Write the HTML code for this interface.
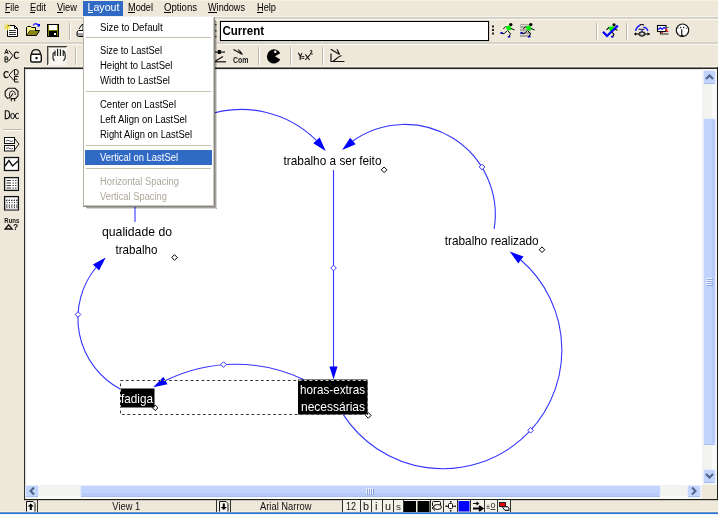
<!DOCTYPE html>
<html><head><meta charset="utf-8">
<style>
html,body{margin:0;padding:0;width:719px;height:515px;overflow:hidden;background:#EDE8D9;}
svg{display:block;will-change:transform;}
text{font-family:"Liberation Sans",sans-serif;}
</style></head><body>
<svg width="719" height="515" viewBox="0 0 719 515">
<rect x="0" y="0" width="719" height="515" fill="#EDE8D9"/>
<!-- menu bar -->
<rect x="83" y="0" width="40" height="17" fill="#316AC5"/>
<g font-size="10.5" fill="#000">
<text x="5" y="11" textLength="14" lengthAdjust="spacingAndGlyphs">File</text>
<text x="30" y="11" textLength="16" lengthAdjust="spacingAndGlyphs">Edit</text>
<text x="57" y="11" textLength="20" lengthAdjust="spacingAndGlyphs">View</text>
<text x="87.5" y="11" textLength="32" lengthAdjust="spacingAndGlyphs" fill="#fff">Layout</text>
<text x="128" y="11" textLength="25" lengthAdjust="spacingAndGlyphs">Model</text>
<text x="164" y="11" textLength="33" lengthAdjust="spacingAndGlyphs">Options</text>
<text x="208" y="11" textLength="37" lengthAdjust="spacingAndGlyphs">Windows</text>
<text x="257" y="11" textLength="19" lengthAdjust="spacingAndGlyphs">Help</text>
</g>
<g fill="#000">
<rect x="5" y="12" width="5" height="1"/>
<rect x="30" y="12" width="5" height="1"/>
<rect x="57" y="12" width="6" height="1"/>
<rect x="88" y="12" width="5" height="1" fill="#fff"/>
<rect x="128" y="12" width="7" height="1"/>
<rect x="164" y="12" width="7" height="1"/>
<rect x="208" y="12" width="9" height="1"/>
<rect x="257" y="12" width="6" height="1"/>
</g>
<!-- rebar lines -->
<rect x="0" y="0" width="719" height="1" fill="#F6F1DC"/>
<rect x="0" y="16" width="719" height="1" fill="#F4F2E8"/>
<rect x="0" y="17" width="719" height="2" fill="#D6D4CA"/>
<rect x="0" y="19" width="719" height="1" fill="#F8F7F0"/>
<rect x="0" y="42" width="719" height="2" fill="#D6D4CA"/>
<rect x="0" y="44" width="719" height="1" fill="#F8F7F0"/>
<!-- canvas -->
<rect x="24" y="66" width="694" height="1" fill="#F5F3EA"/>
<rect x="24" y="67" width="694" height="433" fill="#fff"/>
<rect x="24" y="67" width="694" height="1" fill="#807E78"/>
<rect x="24" y="68" width="694" height="1" fill="#262626"/>
<rect x="24" y="67" width="1" height="433" fill="#2E2E2E"/>
<rect x="25" y="69" width="1" height="430" fill="#DDDDDD"/>
<rect x="25" y="69" width="692" height="1" fill="#E4E4E4"/>
<rect x="717" y="67" width="1" height="433" fill="#1E1E1E"/>
<rect x="24" y="499" width="694" height="1" fill="#1E1E1E"/>
<rect x="24" y="500" width="694" height="1" fill="#C9C5B5"/>
<rect x="718" y="0" width="1" height="515" fill="#FFFFFF"/>
<!-- vertical scrollbar -->
<rect x="702" y="69" width="15" height="416" fill="#F3F3EF"/>
<rect x="712" y="84" width="4" height="400" fill="#FAFAF8"/>
<rect x="703.5" y="118.5" width="12" height="326" rx="2" fill="#C3D4FC" stroke="#E4ECFE"/>
<rect x="704" y="444" width="11" height="1" fill="#A6BEF0"/>
<rect x="712" y="120" width="3" height="323" fill="#B6CBF8"/>
<rect x="703.5" y="70.5" width="12" height="13" rx="2" fill="#C3D4FC" stroke="#E4ECFE"/>
<rect x="704" y="83" width="11" height="1" fill="#A6BEF0"/>
<rect x="703.5" y="469.5" width="12" height="13" rx="2" fill="#C3D4FC" stroke="#E4ECFE"/>
<rect x="704" y="482" width="11" height="1" fill="#A6BEF0"/>
<path d="M706 79 L709.5 75.5 L713 79" fill="none" stroke="#4D6185" stroke-width="2"/>
<path d="M706 474 L709.5 477.5 L713 474" fill="none" stroke="#4D6185" stroke-width="2"/>
<!-- horizontal scrollbar -->
<rect x="26" y="485" width="677" height="14" fill="#F3F3EF"/>
<rect x="38" y="496" width="650" height="3" fill="#FAFAF8"/>
<rect x="80.5" y="485.5" width="580" height="11" rx="2" fill="#C3D4FC" stroke="#E4ECFE"/>
<rect x="81" y="496" width="579" height="1" fill="#A6BEF0"/>
<rect x="82" y="493" width="577" height="3" fill="#B6CBF8"/>
<rect x="25.5" y="485.5" width="13" height="11" rx="2" fill="#C3D4FC" stroke="#E4ECFE"/>
<rect x="26" y="496" width="12" height="1" fill="#A6BEF0"/>
<rect x="687.5" y="485.5" width="13" height="11" rx="2" fill="#C3D4FC" stroke="#E4ECFE"/>
<rect x="688" y="496" width="12" height="1" fill="#A6BEF0"/>
<path d="M34 487.5 L30.5 491 L34 494.5" fill="none" stroke="#4D6185" stroke-width="2"/>
<path d="M692 487.5 L695.5 491 L692 494.5" fill="none" stroke="#4D6185" stroke-width="2"/>
<rect x="702" y="485" width="15" height="14" fill="#EDE8D9"/>
<g fill="#EEF3FF"><rect x="706" y="278" width="6" height="1"/><rect x="706" y="280" width="6" height="1"/><rect x="706" y="282" width="6" height="1"/><rect x="706" y="284" width="6" height="1"/></g>
<g fill="#8EA6DC"><rect x="707" y="279" width="6" height="1"/><rect x="707" y="281" width="6" height="1"/><rect x="707" y="283" width="6" height="1"/><rect x="707" y="285" width="6" height="1"/></g>
<g fill="#EEF3FF"><rect x="366" y="488" width="1" height="6"/><rect x="368" y="488" width="1" height="6"/><rect x="370" y="488" width="1" height="6"/><rect x="372" y="488" width="1" height="6"/></g>
<g fill="#8EA6DC"><rect x="367" y="489" width="1" height="6"/><rect x="369" y="489" width="1" height="6"/><rect x="371" y="489" width="1" height="6"/><rect x="373" y="489" width="1" height="6"/></g>
<!-- bottom blue line -->
<rect x="0" y="511" width="718" height="1" fill="#F7F1DA"/>
<rect x="0" y="512" width="718" height="1" fill="#6E93C8"/>
<rect x="0" y="513" width="718" height="1" fill="#2175DB"/>
<rect x="0" y="514" width="719" height="1" fill="#F4F8FF"/>

<g id="diagram">
<path d="M135 206 V222" stroke="#3535FF" stroke-width="1.1"/>
<path d="M135.26 206.02 A106.50 106.50 0 0 1 316.46 140.45" fill="none" stroke="#3535FF" stroke-width="1.1"/>
<path d="M325.70 150.95 L313.23 143.29 L319.69 137.61Z" fill="#0000FF"/>
<path d="M494.16 229.03 A90.30 90.30 0 0 0 352.88 140.96" fill="none" stroke="#3535FF" stroke-width="1.1"/>
<path d="M342.12 149.89 L350.13 137.65 L355.63 144.27Z" fill="#0000FF"/>
<path d="M343.44 414.91 A118.90 118.90 0 1 0 520.84 260.02" fill="none" stroke="#3535FF" stroke-width="1.1"/>
<path d="M509.74 251.50 L523.45 256.61 L518.22 263.43Z" fill="#0000FF"/>
<path d="M120.00 388.99 A80.40 80.40 0 0 1 95.98 267.50" fill="none" stroke="#3535FF" stroke-width="1.1"/>
<path d="M105.73 257.47 L99.07 270.50 L92.90 264.50Z" fill="#0000FF"/>
<path d="M303.70 379.61 A158.20 158.20 0 0 0 165.47 380.60" fill="none" stroke="#3535FF" stroke-width="1.1"/>
<path d="M153.21 387.35 L163.39 376.83 L167.54 384.36Z" fill="#0000FF"/>
<path d="M333.5 170 L333.5 367" stroke="#3535FF" stroke-width="1.1"/>
<path d="M333.5 379.5 L329.5 366.5 L337.5 366.5Z" fill="#0000FF"/>
<path d="M482.0 164.2 L484.8 167.0 L482.0 169.8 L479.2 167.0Z" fill="#fff" stroke="#3535FF" stroke-width="1"/>
<path d="M333.5 265.2 L336.3 268.0 L333.5 270.8 L330.7 268.0Z" fill="#fff" stroke="#3535FF" stroke-width="1"/>
<path d="M530.6 427.5 L533.4 430.3 L530.6 433.1 L527.8 430.3Z" fill="#fff" stroke="#3535FF" stroke-width="1"/>
<path d="M78.0 311.7 L80.8 314.5 L78.0 317.3 L75.2 314.5Z" fill="#fff" stroke="#3535FF" stroke-width="1"/>
<path d="M223.5 361.7 L226.3 364.5 L223.5 367.3 L220.7 364.5Z" fill="#fff" stroke="#3535FF" stroke-width="1"/>
<path d="M384.1 167.0 L386.9 169.8 L384.1 172.6 L381.3 169.8Z" fill="#fff" stroke="#000" stroke-width="1"/>
<path d="M542.0 246.9 L544.8 249.7 L542.0 252.5 L539.2 249.7Z" fill="#fff" stroke="#000" stroke-width="1"/>
<path d="M174.5 254.7 L177.3 257.5 L174.5 260.3 L171.7 257.5Z" fill="#fff" stroke="#000" stroke-width="1"/>
<path d="M155.2 405.0 L158.0 407.8 L155.2 410.6 L152.4 407.8Z" fill="#fff" stroke="#000" stroke-width="1"/>
<path d="M368.3 412.6 L371.1 415.4 L368.3 418.2 L365.5 415.4Z" fill="#fff" stroke="#000" stroke-width="1"/>
<g font-size="13.5" fill="#000">
<text x="283.5" y="165" textLength="98" lengthAdjust="spacingAndGlyphs">trabalho a ser feito</text>
<text x="444.7" y="245" textLength="94" lengthAdjust="spacingAndGlyphs">trabalho realizado</text>
<text x="102" y="236" textLength="70" lengthAdjust="spacingAndGlyphs">qualidade do</text>
<text x="115.5" y="254" textLength="42" lengthAdjust="spacingAndGlyphs">trabalho</text>
</g>
<!-- selection dashed rect -->

<rect x="120" y="388.5" width="34.5" height="19" fill="#000"/>
<rect x="298" y="379.5" width="69.5" height="35" fill="#000"/>
<g font-size="13.5" fill="#fff">
<text x="121" y="403" textLength="32" lengthAdjust="spacingAndGlyphs">fadiga</text>
<text x="300" y="393.5" textLength="65" lengthAdjust="spacingAndGlyphs">horas-extras</text>
<text x="301" y="411" textLength="64" lengthAdjust="spacingAndGlyphs">necessárias</text>
</g>

<rect x="120.5" y="380.5" width="247" height="34" fill="none" stroke="#C8C8C8" stroke-dasharray="2.8,2.6" style="mix-blend-mode:difference"/>

</g>
<g id="icons">
<!-- ROW 1 -->
<!-- new doc -->
<g>
<path d="M7.5 25.5 H14.5 L17.5 28.5 V36.5 H7.5 Z" fill="#fff" stroke="#000"/>
<path d="M14.5 25.5 V28.5 H17.5" fill="none" stroke="#000"/>
<rect x="9" y="30" width="7" height="1" fill="#333"/>
<rect x="9" y="32" width="7" height="1" fill="#333"/>
<rect x="9" y="34" width="7" height="1" fill="#333"/>
<path d="M4.5 24.5 L10.5 29.5 M10.5 24.5 L4.5 29.5 M7.5 23.5 V30.5 M4 27 H11" stroke="#E6D820" stroke-width="0.9"/>
</g>
<!-- open folder -->
<g>
<path d="M26.5 27.5 L27.5 26.5 H30.5 L31.5 27.5 H35.5 V30.5" fill="#FFFF88" stroke="#000"/>
<path d="M26.5 27.5 V35.5" stroke="#000"/>
<path d="M26.5 35.5 L29.5 30.5 H39.5 L36.5 35.5 Z" fill="#8A8A10" stroke="#000"/>
<path d="M27 29 H35 V30.5 H29.3 L27 34.5Z" fill="#FFFF88"/>
<path d="M33 25.5 Q35 22.5 38 24.5" fill="none" stroke="#3030FF" stroke-width="1.3"/>
<rect x="37.5" y="24" width="2.5" height="2.5" fill="#0000FF"/>
</g>
<!-- save -->
<g>
<rect x="47" y="24" width="12" height="13" fill="#000"/>
<rect x="48" y="25" width="10" height="6" fill="#808000"/>
<rect x="49" y="25" width="8" height="5" fill="#fff"/>
<rect x="48" y="31" width="1" height="5" fill="#808000"/>
<rect x="57" y="31" width="1" height="5" fill="#808000"/>
<rect x="54" y="33" width="2" height="2" fill="#fff"/>
</g>
<rect x="69" y="23" width="1" height="17" fill="#BDBAAA"/>
<rect x="70" y="23" width="1" height="17" fill="#FFFFFF"/>
<!-- printer partial -->
<path d="M79 29 L82 24.5 L83 24.5 V30" fill="#fff" stroke="#000"/>
<path d="M83 30.5 H78.5 Q77 31 77 33 V35.5 L78.5 36.5 H83" fill="#A0A0A0" stroke="#000"/>
<rect x="78" y="31" width="5" height="2" fill="#fff"/>
<!-- text field -->
<rect x="219.5" y="20.5" width="270" height="21" fill="none" stroke="#D8D4C8"/>
<rect x="220.5" y="21.5" width="268" height="19" fill="#fff" stroke="#000"/>
<text x="222.5" y="34.5" font-size="12.5" font-weight="bold" textLength="41.5" lengthAdjust="spacingAndGlyphs">Current</text>
<!-- grip after -->
<rect x="492" y="25.5" width="2" height="2" fill="#222"/>
<rect x="492" y="29" width="2" height="2" fill="#222"/>
<rect x="492" y="32.5" width="2" height="2" fill="#222"/>
<!-- runner 1 -->
<g id="runner">
<circle cx="510.8" cy="24.6" r="1.7" fill="#000"/>
<path d="M505.5 26.3 L510 25.6 L512 29.6 L507.5 30.8 Z" fill="#00EE00"/>
<path d="M505.8 26.5 L503.3 29 M511.2 28.5 L514.5 30 M507 30.8 L504 33.8 L501.8 33 M507.8 30.8 L510.5 33.8 L509.3 36" fill="none" stroke="#000" stroke-width="1"/>
<rect x="500.5" y="32" width="2" height="2" fill="#0000C0"/>
<rect x="507.8" y="36" width="2.5" height="1.5" fill="#0000C0"/>
</g>
<!-- runner 2 with gray stripes -->
<g>
<rect x="520" y="24" width="11" height="13" fill="#ABA9A2"/>
<rect x="520" y="25" width="11" height="1" fill="#D8D6CE"/>
<rect x="520" y="28" width="11" height="1" fill="#D8D6CE"/>
<rect x="520" y="31" width="11" height="1" fill="#D8D6CE"/>
<rect x="520" y="34" width="11" height="1" fill="#D8D6CE"/>
<g transform="translate(20 0)">
<circle cx="510.8" cy="24.6" r="1.7" fill="#000"/>
<path d="M505.5 26.3 L510 25.6 L512 29.6 L507.5 30.8 Z" fill="#00EE00"/>
<path d="M505.8 26.5 L503.3 29 M511.2 28.5 L514.5 30 M507 30.8 L504 33.8 L501.8 33 M507.8 30.8 L510.5 33.8 L509.3 36" fill="none" stroke="#000" stroke-width="1"/>
<rect x="500.5" y="32" width="2" height="2" fill="#0000C0"/>
<rect x="507.8" y="36" width="2.5" height="1.5" fill="#0000C0"/>
</g>
</g>
<!-- separator -->
<rect x="596" y="23" width="1" height="17" fill="#BDBAAA"/>
<rect x="597" y="23" width="1" height="17" fill="#fff"/>
<!-- check runner -->
<g>
<circle cx="614" cy="24.8" r="1.6" fill="#000"/>
<path d="M608.5 26.8 L613.5 26.2 L614.5 30.5 L610 31.5Z" fill="#00EE00"/>
<path d="M609 27.5 L606.5 29.8 M614 28.8 L617.5 30.2 M611.5 31.5 L614 34.5 L612 36.8" fill="none" stroke="#000" stroke-width="1.1"/>
<path d="M603 31.8 L607 36 L617.8 25.6" fill="none" stroke="#0000FF" stroke-width="2.2"/>
<rect x="611" y="36" width="2.5" height="1.5" fill="#0000C0"/>
</g>
<rect x="626" y="23" width="1" height="17" fill="#BDBAAA"/>
<rect x="627" y="23" width="1" height="17" fill="#fff"/>
<!-- loop icon -->
<g>
<path d="M635.5 30.8 Q636.5 27 640.3 24.8 M643.3 27.3 Q647 27.5 647.8 31" fill="none" stroke="#2020FF" stroke-width="1.5"/>
<rect x="640" y="24" width="4" height="1.2" fill="#222"/>
<path d="M638.5 29.3 H644.5" stroke="#222" stroke-width="1"/>
<path d="M642 29.5 V31.5" stroke="#2020FF" stroke-width="1.3"/>
<path d="M634 34 H650" stroke="#000" stroke-width="1"/>
<path d="M635 32.3 L637 34 L635 35.7Z M647.5 32.3 L649.5 34 L647.5 35.7Z" fill="#000"/>
<ellipse cx="642" cy="34" rx="3.2" ry="2.2" fill="#8a8a8a" stroke="#000"/>
<rect x="641" y="33" width="2" height="1.5" fill="#eee"/>
</g>
<!-- graph icon -->
<g>
<rect x="657.5" y="25.5" width="8.5" height="6" fill="#fff" stroke="#000" stroke-width="1.1"/>
<path d="M658.3 29.5 L660.3 27.8 L662 29.2 L664 27.5 L665.5 28.5" fill="none" stroke="#0000FF" stroke-width="1.3"/>
<path d="M660.5 32 V34 H668.5" fill="none" stroke="#222" stroke-width="1.1"/>
<path d="M665.5 29 L668 31.8" stroke="#F00000" stroke-width="1.2"/>
<rect x="661" y="31.8" width="2" height="1" fill="#E00000"/>
<rect x="666.5" y="27" width="2" height="1" fill="#444"/>
</g>
<!-- gauge -->
<g>
<circle cx="682.5" cy="30.2" r="6.2" fill="#fff" stroke="#111" stroke-width="1.2"/>
<rect x="680" y="26.8" width="1.2" height="1.4" fill="#222"/>
<rect x="683" y="26.8" width="1.2" height="1.4" fill="#222"/>
<rect x="677.3" y="27.5" width="1.2" height="1" fill="#333"/>
<rect x="685.7" y="27.8" width="1.2" height="1" fill="#555"/>
<path d="M681.7 29.3 V34.5" stroke="#111" stroke-width="1.1"/>
<path d="M679.8 36.4 L682 34 L684.2 36.4Z" fill="#111"/>
</g>

<!-- ROW 2 -->
<!-- AbC -->
<path d="M4.8 54 L6.5 49.3 L8.2 54 M5.4 52.5 H7.6" fill="none" stroke="#111" stroke-width="1"/>
<path d="M5 56.8 H6.8 Q8.2 57 7.6 59 Q8.7 60 7.5 62 H5 Z M5 59.2 H7.5" fill="none" stroke="#111" stroke-width="1"/>
<path d="M8.8 50.5 L12.8 55.5 L8.8 61" fill="none" stroke="#111" stroke-width="1"/>
<path d="M18.8 53 Q17.8 52 16.6 52 Q14.3 52.2 14.3 55.2 Q14.3 58.3 16.6 58.4 Q17.8 58.4 18.9 57.4" fill="none" stroke="#111" stroke-width="1.2"/>
<!-- lock -->
<g>
<path d="M31.5 54.5 Q31.5 49.6 36 49.6 Q40.5 49.6 40.5 54.5" fill="none" stroke="#111" stroke-width="1.4"/>
<rect x="30.7" y="54.2" width="10.6" height="7.8" rx="1.5" fill="#fff" stroke="#111" stroke-width="1.4"/>
<rect x="35.5" y="57" width="2" height="2.2" fill="#000"/>
</g>
<!-- pressed hand button -->
<rect x="47" y="46" width="20" height="19" fill="#F6F5F0"/>
<rect x="47" y="46" width="20" height="1" fill="#404040"/>
<rect x="47" y="46" width="1" height="19" fill="#404040"/>
<rect x="48" y="47" width="18" height="1" fill="#B0AC9C"/>
<rect x="48" y="47" width="1" height="17" fill="#B0AC9C"/>
<path d="M55 56 V50.5 M57.6 56 V48.8 M60.4 56 V49.2 M63.2 56 V50.8 Q65.2 52 65.2 55 V58 L63.5 61 M53 53.5 V58.5 L54.3 61 M53 53.5 L54.5 52.5" fill="none" stroke="#111" stroke-width="1.1"/>
<rect x="75" y="47" width="1" height="18" fill="#BDBAAA"/>
<rect x="76" y="47" width="1" height="18" fill="#fff"/>
<!-- partial icon left of Com -->
<rect x="215" y="51.5" width="10" height="1.2" fill="#111"/>
<rect x="217.8" y="50" width="3" height="4" fill="#000"/>
<path d="M215.5 61 L223 56.5" stroke="#111" stroke-width="1.2"/>
<rect x="215" y="61.2" width="11" height="1.2" fill="#111"/>
<!-- Com -->
<path d="M233.5 49.5 L242.5 54.5 M238 49.5 L242.5 54.5 L239.5 50.5" fill="none" stroke="#111" stroke-width="1.1"/>
<text x="233" y="62.7" font-size="9.2" font-weight="bold" textLength="15.5" lengthAdjust="spacingAndGlyphs" fill="#1a1a1a">Com</text>
<rect x="258" y="47" width="1" height="18" fill="#BDBAAA"/>
<rect x="259" y="47" width="1" height="18" fill="#fff"/>
<!-- pacman -->
<path d="M280.3 53.2 A7.1 7.1 0 1 0 280.3 59.6 L275 56.3 Z" fill="#000"/>
<circle cx="275.3" cy="51.8" r="1.2" fill="#fff"/>
<rect x="290" y="47" width="1" height="18" fill="#BDBAAA"/>
<rect x="291" y="47" width="1" height="18" fill="#fff"/>
<!-- Y=X2 -->
<path d="M298.3 52.8 L300.2 56.3 L302 53.3 M300.2 56.3 V60" fill="none" stroke="#111" stroke-width="1.15"/>
<path d="M301.3 56.6 H304.3 M301.3 58.3 H304.3" stroke="#222" stroke-width="1"/>
<path d="M305.3 54.4 L309.6 60 M310 54.6 L305.3 60" fill="none" stroke="#111" stroke-width="1.1"/>
<path d="M309.8 51.3 Q310.5 50.2 311.7 50.6 Q312.7 51.5 310.2 54 H312.8" fill="none" stroke="#111" stroke-width="1"/>
<rect x="322" y="47" width="1" height="18" fill="#BDBAAA"/>
<rect x="323" y="47" width="1" height="18" fill="#fff"/>
<!-- last icon -->
<path d="M331 53.5 V61.5 H344.5" fill="none" stroke="#111" stroke-width="1.2"/>
<path d="M330.8 49.3 L339.6 54.6 M337 49.3 L339.6 54.6 M341.5 55.5 Q338 57 336 59 L333.3 61" fill="none" stroke="#111" stroke-width="1.2"/>

<!-- LEFT TOOLBAR -->
<!-- C<DE -->
<path d="M8.5 72.5 Q7.5 71.5 6.3 71.5 Q4 71.7 4 74.5 Q4 77.5 6.3 77.6 Q7.5 77.6 8.6 76.6" fill="none" stroke="#111" stroke-width="1.2"/>
<path d="M14 69.5 L9 75 L14 80.5" fill="none" stroke="#111" stroke-width="1"/>
<path d="M14.5 69.5 V75 H16 Q18.3 75 18.3 72.25 Q18.3 69.5 16 69.5 Z" fill="none" stroke="#111" stroke-width="1"/>
<path d="M18.5 76.5 H14.5 V82 H18.5 M14.5 79.2 H17.5" fill="none" stroke="#111" stroke-width="1"/>
<!-- target icon -->
<path d="M8.2 88.3 H15 L18 91.3 V95.8 L15.2 98.8 M8 98.8 L5.2 95.8 V91.3 L8.2 88.3" fill="none" stroke="#111" stroke-width="1.1"/>
<path d="M9.5 96 Q9 91 12.5 91 Q15.8 91.3 15.3 95" fill="none" stroke="#222" stroke-width="1"/>
<path d="M8 98.5 L9.5 96.2 L11 98.2 Z" fill="#000"/>
<path d="M10.5 97 L13 93.5" stroke="#111" stroke-width="1.2"/>
<path d="M11.3 101.2 V98.6 H14.6 V101.2" fill="none" stroke="#111" stroke-width="1.1"/>
<!-- Doc -->
<path d="M5.3 110.8 H7 Q9.6 111 9.6 114.7 Q9.6 118.4 7 118.6 H5.3 Z" fill="none" stroke="#111" stroke-width="1.1"/>
<ellipse cx="12.6" cy="116" rx="1.9" ry="2.6" fill="none" stroke="#111" stroke-width="1"/>
<path d="M18.8 114 Q18 113.3 17.2 113.3 Q15.4 113.5 15.4 116 Q15.4 118.5 17.2 118.6 Q18 118.6 18.8 118" fill="none" stroke="#111" stroke-width="1"/>
<rect x="3" y="129" width="19" height="1" fill="#BDBAAA"/>
<rect x="3" y="130" width="19" height="1" fill="#fff"/>
<!-- icon sketch -->
<rect x="4.5" y="137.5" width="10" height="6" fill="#fff" stroke="#111"/>
<rect x="4.5" y="145.5" width="10" height="5.5" fill="#fff" stroke="#111"/>
<path d="M6 141 Q8 139.5 10 141 T13 140.5 M6 148.5 Q8 147 10 148.5 T13 148" fill="none" stroke="#333" stroke-width="0.8"/>
<path d="M14.5 138.5 L19 144 L14.5 150" fill="none" stroke="#111" stroke-width="1"/>
<!-- graph -->
<rect x="4.5" y="157.5" width="14" height="13" fill="#fff" stroke="#111" stroke-width="1.3"/>
<path d="M5 166 L9 160.5 L12.5 166 L18 161" fill="none" stroke="#111" stroke-width="1.4"/>
<!-- table -->
<rect x="4.5" y="177.5" width="14" height="13" fill="#fff" stroke="#111" stroke-width="1.1"/>
<rect x="5.5" y="178.5" width="12" height="11" fill="none" stroke="#999" stroke-width="0.6"/>
<path d="M6.5 180.5 H11 M6.5 183 H11 M6.5 185.5 H11 M6.5 188 H11" stroke="#222" stroke-width="0.9"/>
<path d="M12.5 180.5 H17 M12.5 183 H17 M12.5 185.5 H17 M12.5 188 H17" stroke="#333" stroke-width="0.9" stroke-dasharray="1.5,1"/>
<!-- grid -->
<rect x="4.5" y="196.5" width="14" height="13.5" fill="#fff" stroke="#111" stroke-width="1.1"/>
<rect x="5.5" y="197.5" width="12" height="11.5" fill="none" stroke="#999" stroke-width="0.6"/>
<path d="M7 199.5 V208 M9.5 199.5 V208 M12 199.5 V208 M14.5 199.5 V208 M17 199.5 V208" stroke="#222" stroke-width="0.9" stroke-dasharray="1.3,1.1"/>
<path d="M6 200.5 H17.5 M6 206 H17.5" stroke="#222" stroke-width="0.9" stroke-dasharray="1,1.5"/>
<!-- Runs -->
<text x="4.3" y="223" font-size="7.5" font-weight="bold" textLength="15" lengthAdjust="spacingAndGlyphs" fill="#111">Runs</text>
<path d="M5.2 229 L8.7 224.8 L12.2 229 Z" fill="none" stroke="#111" stroke-width="1.3"/>
<text x="13" y="229.8" font-size="8.5" font-weight="bold" fill="#111">?</text>
</g>

<!-- STATUS BAR -->
<g id="status">
<rect x="26" y="501" width="10" height="11" fill="#F6F4EA"/>
<path d="M26.5 511.5 V501.5 H33 L35 503.5 V511.5" fill="none" stroke="#111"/>
<path d="M30.8 503.5 L27.8 506.5 H29.8 V510 H31.8 V506.5 H33.8 Z" fill="#000"/>
<rect x="37" y="500" width="1" height="12" fill="#333"/>
<text x="112.3" y="510" font-size="11" textLength="28" lengthAdjust="spacingAndGlyphs" fill="#111">View 1</text>
<rect x="216" y="500" width="1" height="12" fill="#333"/>
<rect x="218" y="501" width="11" height="11" fill="#F6F4EA"/>
<path d="M219.5 511.5 V501.5 H226 L228 503.5 V511.5" fill="none" stroke="#111"/>
<path d="M223.8 510 L220.8 507 H222.8 V503.5 H224.8 V507 H226.8 Z" fill="#000"/>
<rect x="230" y="500" width="1" height="12" fill="#333"/>
<text x="260" y="510" font-size="11" textLength="51.5" lengthAdjust="spacingAndGlyphs" fill="#111">Arial Narrow</text>
<rect x="343" y="500" width="168" height="12" fill="#F4F2E6"/>
<g fill="#333">
<rect x="342" y="500" width="1" height="12"/>
<rect x="360" y="500" width="1" height="12"/>
<rect x="371" y="500" width="1" height="12"/>
<rect x="382" y="500" width="1" height="12"/>
<rect x="393" y="500" width="1" height="12"/>
<rect x="403" y="500" width="1" height="12"/>
<rect x="430" y="500" width="1" height="12"/>
<rect x="443" y="500" width="1" height="12"/>
<rect x="457" y="500" width="1" height="12"/>
<rect x="470" y="500" width="1" height="12"/>
<rect x="484" y="500" width="1" height="12"/>
<rect x="497" y="500" width="1" height="12"/>
<rect x="510" y="500" width="1" height="12"/>
</g>
<g font-size="11" fill="#111">
<text x="346" y="510" textLength="10" lengthAdjust="spacingAndGlyphs">12</text>
<text x="363" y="510" textLength="6" lengthAdjust="spacingAndGlyphs">b</text>
<text x="375" y="510" textLength="2.5" lengthAdjust="spacingAndGlyphs">i</text>
<text x="385" y="510" textLength="6" lengthAdjust="spacingAndGlyphs">u</text>
<text x="396" y="510" font-size="9" textLength="5" lengthAdjust="spacingAndGlyphs" fill="#333">s</text>
</g>
<rect x="404" y="501" width="12" height="11" fill="#000"/>
<rect x="417.5" y="501" width="12" height="11" fill="#000"/>
<!-- connector icon -->
<path d="M432.5 506 V502.5 Q432.5 501.5 433.5 501.5 H439.5 Q440.5 501.5 440.5 502.5 V505" fill="none" stroke="#111"/>
<ellipse cx="437.5" cy="507" rx="4" ry="2.5" fill="none" stroke="#111"/>
<path d="M432 508 L435 510.5 M432 508 L434.5 506" stroke="#111"/>
<!-- target dotted -->
<rect x="448.5" y="503.5" width="4" height="5" rx="1" fill="#fff" stroke="#111"/>
<rect x="450" y="501" width="1.5" height="1.5" fill="#111"/>
<rect x="450" y="510" width="1.5" height="1.5" fill="#111"/>
<rect x="445.5" y="505.5" width="1.5" height="1.5" fill="#111"/>
<rect x="454.5" y="505.5" width="1.5" height="1.5" fill="#111"/>
<path d="M447 506.3 H448.5 M452.5 506.3 H454.5" stroke="#111"/>
<rect x="458.5" y="501" width="11" height="10.5" fill="#0000FF"/>
<!-- arrows -->
<path d="M473 503.5 H478 M476.5 502 L478.5 503.5 L476.5 505" fill="none" stroke="#111" stroke-width="1.1"/>
<path d="M473 508.5 H481 M479 506 L482.5 508.5 L479 511" fill="none" stroke="#000" stroke-width="2"/>
<!-- ±0 -->
<text x="486" y="508.5" font-size="8" textLength="4" lengthAdjust="spacingAndGlyphs" fill="#222">±</text>
<text x="490.5" y="508" font-size="8" textLength="5" lengthAdjust="spacingAndGlyphs" fill="#222">0</text>
<rect x="490.5" y="509" width="5" height="1" fill="#444"/>
<!-- red icon -->
<rect x="499.5" y="502.5" width="6" height="4" fill="#F00000" stroke="#222" stroke-width="1"/>
<path d="M502 506.5 H507.5 L509 508 V510.5 H505 Z" fill="#BBB" stroke="#222" stroke-width="1"/>
<path d="M504 508.5 H508" stroke="#fff"/>
</g>

<!-- dropdown menu -->
<rect x="215" y="20" width="1" height="188" fill="#000" opacity="0.36"/>
<rect x="216" y="21" width="1" height="188" fill="#000" opacity="0.16"/>
<rect x="86" y="207" width="129" height="1" fill="#000" opacity="0.36"/>
<rect x="87" y="208" width="130" height="1" fill="#000" opacity="0.16"/>
<rect x="83" y="17" width="132" height="190" fill="#8A877A"/>
<rect x="84" y="17" width="130" height="189" fill="#fff"/>
<rect x="213" y="18" width="1" height="188" fill="#C8C6BE"/>
<rect x="84" y="205" width="130" height="1" fill="#C8C6BE"/>
<rect x="83" y="17" width="1" height="189" fill="#B5B2A5"/>
<rect x="86" y="37" width="125" height="1" fill="#C5C2B2"/>
<rect x="86" y="91" width="125" height="1" fill="#C5C2B2"/>
<rect x="86" y="145" width="125" height="1" fill="#C5C2B2"/>
<rect x="86" y="168" width="125" height="1" fill="#C5C2B2"/>
<rect x="85" y="150" width="127" height="15" fill="#316AC5"/>
<g font-size="10" fill="#000">
<text x="100" y="30.5" textLength="62.7" lengthAdjust="spacingAndGlyphs">Size to Default</text>
<text x="100" y="54" textLength="62" lengthAdjust="spacingAndGlyphs">Size to LastSel</text>
<text x="100" y="69" textLength="72.5" lengthAdjust="spacingAndGlyphs">Height to LastSel</text>
<text x="100" y="83.5" textLength="70" lengthAdjust="spacingAndGlyphs">Width to LastSel</text>
<text x="100" y="107.5" textLength="76" lengthAdjust="spacingAndGlyphs">Center on LastSel</text>
<text x="100" y="122.5" textLength="87" lengthAdjust="spacingAndGlyphs">Left Align on LastSel</text>
<text x="100" y="137.5" textLength="92" lengthAdjust="spacingAndGlyphs">Right Align on LastSel</text>
<text x="100" y="161" textLength="78" lengthAdjust="spacingAndGlyphs" fill="#fff">Vertical on LastSel</text>
<text x="100" y="184.5" textLength="79" lengthAdjust="spacingAndGlyphs" fill="#ACA899">Horizontal Spacing</text>
<text x="100" y="199.5" textLength="67" lengthAdjust="spacingAndGlyphs" fill="#ACA899">Vertical Spacing</text>
</g>
<!-- grip before field (over shadow) -->
<rect x="215" y="24" width="1.5" height="1.5" fill="#333"/>
<rect x="215" y="30" width="1.5" height="1.5" fill="#333"/>
<rect x="215" y="35.8" width="1.5" height="1.5" fill="#333"/>

</svg>
</body></html>
